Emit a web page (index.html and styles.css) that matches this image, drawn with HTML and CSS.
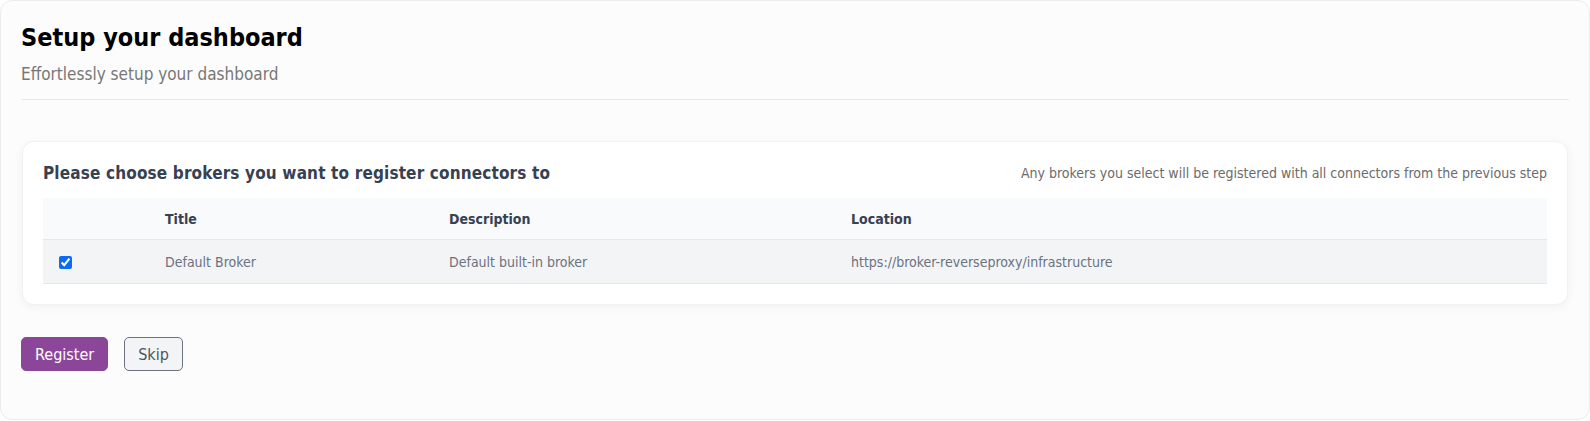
FILE: index.html
```html
<!DOCTYPE html>
<html>
<head>
<meta charset="utf-8">
<link rel="stylesheet" href="styles.css">
</head>
<body>
<div class="page">
  <header class="head">
    <h1 class="title">Setup your dashboard</h1>
    <p class="subtitle">Effortlessly setup your dashboard</p>
  </header>
  <section class="card">
    <div class="card-head">
      <h2 class="card-title">Please choose brokers you want to register connectors to</h2>
      <span class="card-note">Any brokers you select will be registered with all connectors from the previous step</span>
    </div>
    <table class="table">
      <colgroup>
        <col class="c1"><col class="c2"><col class="c3"><col class="c4">
      </colgroup>
      <thead>
        <tr><th></th><th>Title</th><th>Description</th><th>Location</th></tr>
      </thead>
      <tbody>
        <tr>
          <td><input type="checkbox" class="check" checked></td>
          <td>Default Broker</td>
          <td>Default built-in broker</td>
          <td>https://broker-reverseproxy/infrastructure</td>
        </tr>
      </tbody>
    </table>
  </section>
  <div class="actions">
    <button class="btn btn-primary">Register</button>
    <button class="btn btn-secondary">Skip</button>
  </div>
</div>
</body>
</html>
```
FILE: styles.css
```css
html, body {
  margin: 0;
  padding: 0;
  background: #ffffff;
}
body {
  font-family: "DejaVu Sans Condensed", "DejaVu Sans", sans-serif;
}
.page {
  box-sizing: border-box;
  width: 1590px;
  height: 420px;
  background: #fcfcfc;
  border: 1px solid #ececec;
  border-radius: 12px;
  padding: 20px 20px 0 20px;
}
.head {
  border-bottom: 1px solid #e6e7ef;
  padding-bottom: 13px;
}
.title {
  margin: 0;
  font-size: 25px;
  line-height: 34px;
  font-weight: bold;
  color: #000;
}
.subtitle {
  margin: 7px 0 0 0;
  font-size: 17px;
  line-height: 24px;
  color: #777;
}
.card {
  margin-top: 41px;
  background: #fff;
  border-radius: 12px;
  box-shadow: 0 2px 10px rgba(0, 0, 0, 0.05);
  border: 1px solid #f2f2f2;
  padding: 19px 20px 20px 20px;
  margin-left: 1px;
  margin-right: 1px;
}
.card-head {
  display: flex;
  justify-content: space-between;
  align-items: center;
  height: 24px;
  margin-bottom: 13px;
}
.card-title {
  margin: 0;
  font-size: 17px;
  letter-spacing: 0.15px;
  font-weight: bold;
  color: #374151;
}
.card-note {
  font-size: 14px;
  color: #6b6b6b;
}
.table {
  width: 100%;
  border-collapse: collapse;
  font-size: 14px;
}
.c1 { width: 106px; }
.c2 { width: 284px; }
.c3 { width: 402px; }
.table th {
  background: #f9fafb;
  text-align: left;
  font-weight: bold;
  color: #374151;
  height: 41px;
  padding: 0 16px;
  border-bottom: 1px solid #e5e7eb;
}
.table td {
  background: #f3f4f6;
  color: #6b7280;
  height: 43px;
  padding: 0 16px;
  border-bottom: 1px solid #e5e7eb;
}
.check {
  margin: 0;
  width: 13px;
  height: 13px;
  accent-color: #0b6bf5;
  vertical-align: middle;
}
.actions {
  display: flex;
  gap: 16px;
  margin-top: 32px;
}
.btn {
  font-family: inherit;
  font-size: 16px;
  height: 34px;
  border-radius: 5px;
  padding: 0 13px;
}
.btn-primary {
  background: #8c4699;
  color: #fff;
  border: 1px solid #8c4699;
}
.btn-secondary {
  background: #f3f4f6;
  color: #4b5563;
  border: 1px solid #6b7280;
}
```
